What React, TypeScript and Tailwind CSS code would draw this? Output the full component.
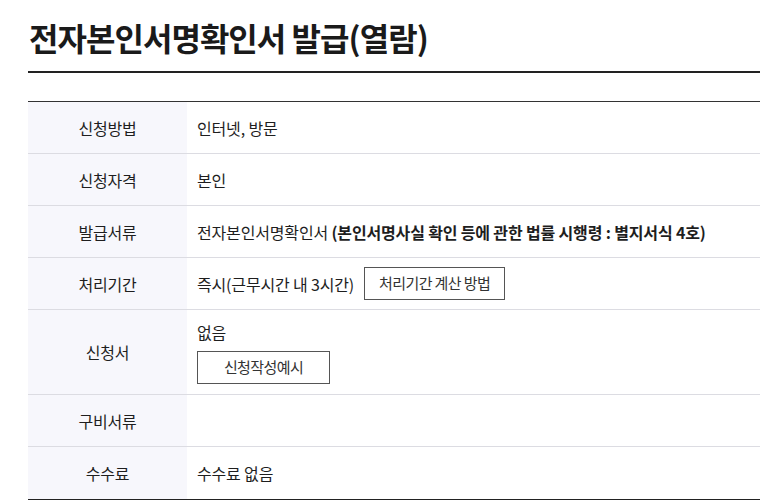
import React from 'react';

const font = { fontFamily: '"Noto Sans CJK KR", "Noto Sans", sans-serif' };

function Row({ label, children, tall, last }: { label: string; children?: React.ReactNode; tall?: boolean; last?: boolean }) {
  return (
    <div className={`flex ${tall ? 'h-[85px]' : 'h-[52px]'} ${last ? '' : 'border-b border-[#dcdce2]'}`}>
      <div className="w-[159px] shrink-0 bg-[#f7f7fc] flex items-center justify-center text-[16px] tracking-[-0.01em] text-[#1e1e1e]">
        {label}
      </div>
      <div className="flex-1 flex items-center pl-[10px] text-[16px] tracking-[-0.01em] text-[#1e1e1e]">
        {children}
      </div>
    </div>
  );
}

export default function App() {
  return (
    <div className="w-[760px] h-[500px] bg-white overflow-hidden pl-[28px]" style={font}>
      {/* Title */}
      <h1 className="pt-[13px] h-[71px] text-[32px] font-bold leading-[48px] tracking-[-0.03em] text-[#1a1a1a] pl-[1px]">
        전자본인서명확인서 발급(열람)
      </h1>
      <div className="h-[2px] bg-[#222]" />

      {/* Info table */}
      <div className="mt-[28px] border-t border-[#333] border-b-2 border-b-[#222]">
        <Row label="신청방법">인터넷, 방문</Row>
        <Row label="신청자격">본인</Row>
        <Row label="발급서류">
          <span>
            전자본인서명확인서 <span className="font-bold">(본인서명사실 확인 등에 관한 법률 시행령 : 별지서식 4호)</span>
          </span>
        </Row>
        <Row label="처리기간">
          <span>즉시(근무시간 내 3시간)</span>
          <button className="ml-[10px] h-[33px] w-[141px] border border-[#555] bg-white text-[15px] tracking-[-0.04em] text-[#333]">
            처리기간 계산 방법
          </button>
        </Row>
        <Row label="신청서" tall>
          <div className="flex flex-col items-start">
            <span className="leading-[24px]">없음</span>
            <button className="mt-[7px] h-[33px] w-[133px] border border-[#555] bg-white text-[15px] tracking-[-0.04em] text-[#333]">
              신청작성예시
            </button>
          </div>
        </Row>
        <Row label="구비서류" />
        <Row label="수수료" last>수수료 없음</Row>
      </div>
    </div>
  );
}
